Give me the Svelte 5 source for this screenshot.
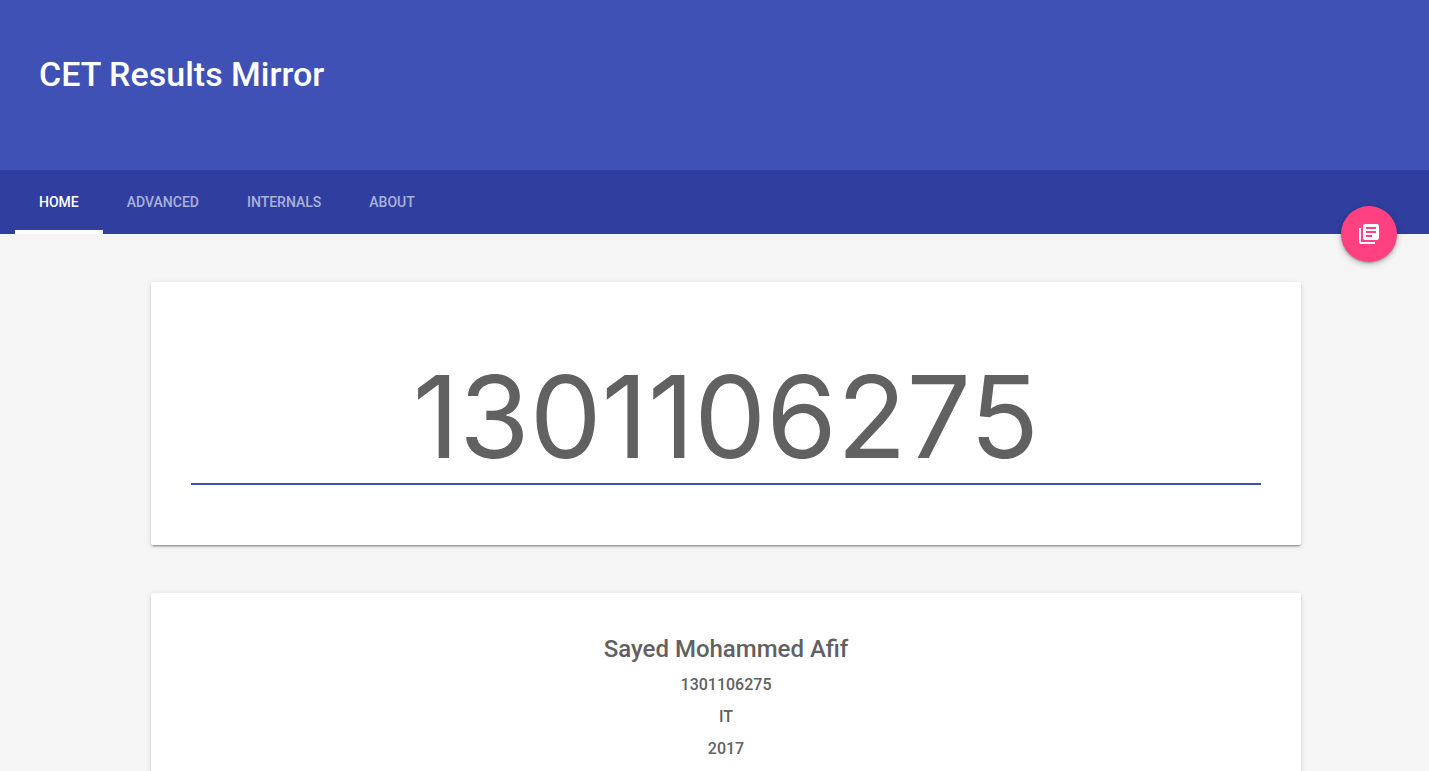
<script>
  const tabs = ['Home', 'Advanced', 'Internals', 'About'];
  let active = $state('Home');
  let usn = $state('1301106275');
  const details = ['1301106275', 'IT', '2017'];
</script>

<div class="layout">
  <header>
    <h1>CET Results Mirror</h1>
    <nav>
      {#each tabs as tab}
        <a href={'#' + tab.toLowerCase()} class:active={active === tab} onclick={() => (active = tab)}>{tab}</a>
      {/each}
      <button class="fab" aria-label="Results">
        <svg viewBox="0 0 24 24" aria-hidden="true">
          <path d="M4 6H2v14c0 1.1.9 2 2 2h14v-2H4V6zm16-4H8c-1.1 0-2 .9-2 2v12c0 1.1.9 2 2 2h12c1.1 0 2-.9 2-2V4c0-1.1-.9-2-2-2zm-1 9H9V9h10v2zm-4 4H9v-2h6v2zm4-8H9V5h10v2z" />
        </svg>
      </button>
    </nav>
  </header>
  <main>
    <section class="card search">
      <input aria-label="Roll number" bind:value={usn} />
    </section>
    <section class="card">
      <h2>Sayed Mohammed Afif</h2>
      {#each details as line}
        <p>{line}</p>
      {/each}
    </section>
  </main>
</div>

<style>
  :global(html) {
    overflow: hidden;
  }
  :global(body) {
    background: #f5f5f5;
  }
  .layout {
    height: 100vh;
    overflow: hidden;
    background: #f5f5f5;
    color: #616161;
    font-family: Roboto, sans-serif;
  }
  header {
    background: #3f51b5;
    color: #fff;
  }
  h1 {
    margin: 0;
    padding: 50px 39px 72px;
    font-size: 34px;
    line-height: 48px;
    font-weight: 500;
  }
  nav {
    position: relative;
    display: flex;
    height: 64px;
    padding-left: 15px;
    background: #303f9f;
  }
  nav a {
    box-sizing: border-box;
    padding: 0 24px;
    border-bottom: 4px solid transparent;
    color: rgba(255, 255, 255, 0.6);
    font-size: 14px;
    line-height: 64px;
    font-weight: 500;
    text-decoration: none;
    text-transform: uppercase;
  }
  nav a.active {
    border-color: #fff;
    color: #fff;
  }
  .fab {
    position: absolute;
    right: 32px;
    bottom: -28px;
    display: grid;
    place-items: center;
    width: 56px;
    height: 56px;
    padding: 0;
    border: 0;
    border-radius: 50%;
    background: #ff4081;
    box-shadow: 0 1px 2px rgba(0, 0, 0, 0.24), 0 2px 6px rgba(0, 0, 0, 0.28);
  }
  .fab svg {
    width: 24px;
    height: 24px;
    fill: #fff;
  }
  main {
    display: grid;
    gap: 48px;
    margin: 48px 128px 48px 151px;
  }
  .card {
    padding: 40px;
    border-radius: 2px;
    background: #fff;
    box-shadow: 0 2px 2px rgba(0, 0, 0, 0.14), 0 3px 1px -2px rgba(0, 0, 0, 0.2), 0 1px 5px rgba(0, 0, 0, 0.12);
    text-align: center;
  }
  .search {
    padding-bottom: 60px;
  }
  input {
    display: block;
    box-sizing: border-box;
    width: 100%;
    height: 163px;
    padding: 28px 0 0;
    border: 0;
    border-bottom: 2px solid #3f51b5;
    border-radius: 0;
    outline: 0;
    background: none;
    color: #616161;
    font: 400 114px Inter, sans-serif;
    text-align: center;
  }
  h2 {
    margin: 0;
    font-size: 24px;
    line-height: 32px;
    font-weight: 500;
  }
  p {
    margin: 8px 0;
    font-size: 16px;
    line-height: 24px;
    font-weight: 500;
  }
</style>
